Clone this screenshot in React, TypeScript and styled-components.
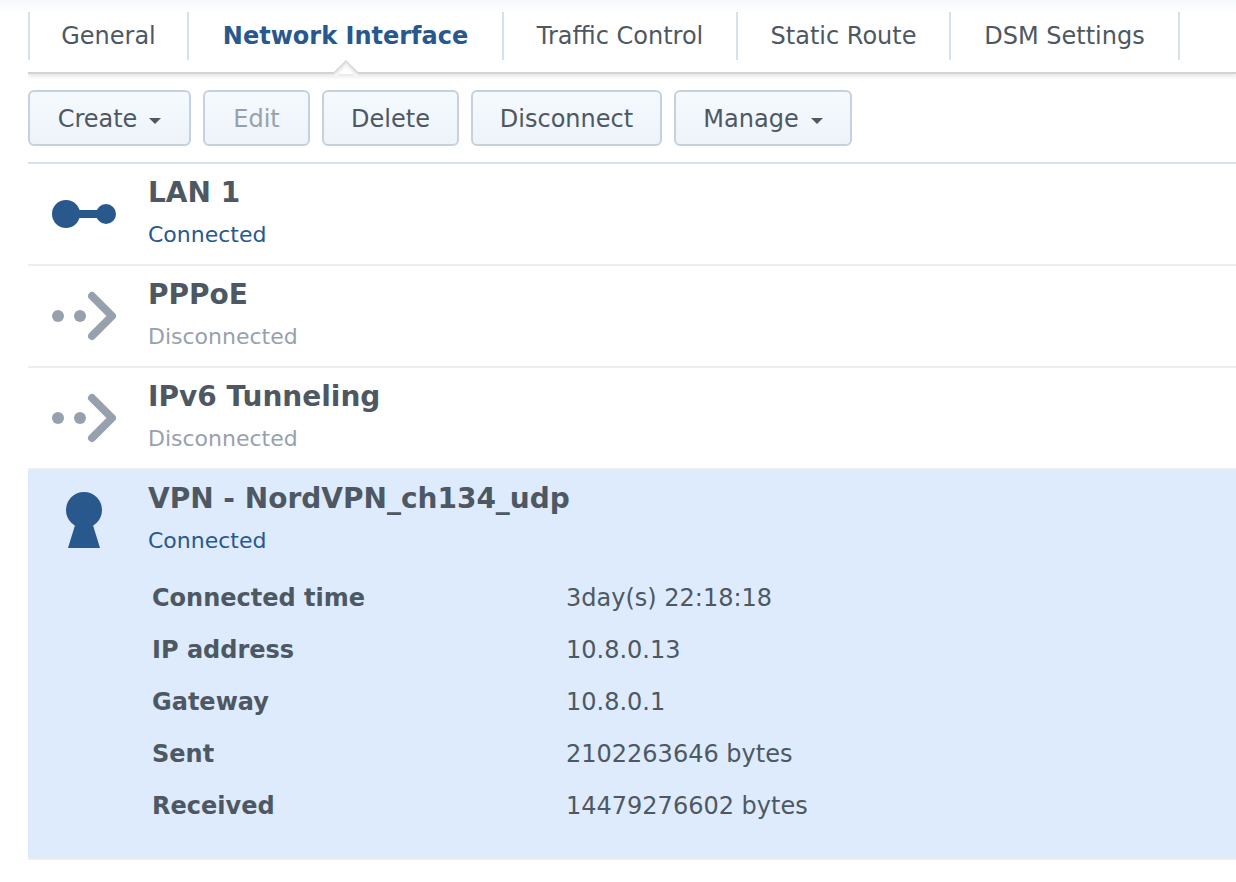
import React, { useState } from "react";
import styled, { createGlobalStyle, css } from "styled-components";

const color = {
  text: "#4d5863",
  muted: "#97a1ad",
  blue: "#29588d",
  line: "#d5e1ed",
  rowLine: "#e9eef3",
  selected: "#deebfc",
  buttonBorder: "#c6d1de",
};

const GlobalStyle = createGlobalStyle`
  *, *::before, *::after { box-sizing: border-box; }
  body {
    margin: 0;
    background: #fff;
    color: ${color.text};
    font-family: Verdana, "DejaVu Sans", sans-serif;
    font-size: 24px;
    line-height: 32px;
  }
`;

const Page = styled.div`
  padding: 12px 0 22px 28px;
  background: linear-gradient(#f5f8fc, #fff) top / 100% 12px no-repeat;
  overflow-x: hidden;
`;

const TabBar = styled.nav`
  display: flex;
  padding-bottom: 12px;
  border-bottom: 2px solid #d2d3d5;
  box-shadow: 0 2px 5px rgba(0, 0, 0, 0.12);
  clip-path: inset(0 0 -10px 0);
`;

const Tab = styled.button<{ $active: boolean; $width: number }>`
  position: relative;
  flex: none;
  width: ${(p) => p.$width}px;
  height: 48px;
  padding: 0;
  border: 0;
  border-right: 2px solid ${color.line};
  background: none;
  color: ${(p) => (p.$active ? color.blue : color.text)};
  font: inherit;
  font-weight: ${(p) => (p.$active ? 700 : 400)};
  white-space: nowrap;
  cursor: pointer;

  &:first-child {
    border-left: 2px solid ${color.line};
  }
`;

const Pointer = styled.svg`
  position: absolute;
  left: 50%;
  top: 100%;
  width: 28px;
  height: 20px;
  margin-left: -14px;
`;

const Toolbar = styled.div`
  display: flex;
  gap: 12px;
  padding: 16px 0;
  border-bottom: 2px solid ${color.line};
`;

const ToolButton = styled.button<{ $width: number }>`
  display: flex;
  flex: none;
  align-items: center;
  justify-content: center;
  gap: 12px;
  width: ${(p) => p.$width}px;
  height: 56px;
  padding: 2px 0 0;
  border: 2px solid ${color.buttonBorder};
  border-radius: 6px;
  background: linear-gradient(#f5faff, #eef3f9);
  color: ${color.text};
  font: inherit;
  cursor: pointer;

  &:disabled {
    color: ${color.muted};
    cursor: default;
  }
`;

const Caret = styled.svg`
  width: 12px;
  height: 6px;
  margin-top: 4px;
  fill: currentColor;
`;

const List = styled.ul`
  margin: 0;
  padding: 0;
  list-style: none;
`;

const Item = styled.li<{ $selected: boolean }>`
  border-bottom: 2px solid ${color.rowLine};
  ${(p) =>
    p.$selected &&
    css`
      background: ${color.selected};
    `}
`;

const Summary = styled.div`
  display: flex;
  gap: 32px;
  padding: 11px 24px 15px;
`;

const Icon = styled.svg<{ $on: boolean }>`
  flex: none;
  width: 64px;
  height: 64px;
  margin-top: 7px;
  color: ${(p) => (p.$on ? color.blue : color.muted)};
`;

const Labels = styled.div`
  display: flex;
  flex-direction: column;
  gap: 10px;
`;

const Name = styled.h2`
  margin: 0;
  font-size: 28px;
  line-height: 36px;
  font-weight: 700;
`;

const Status = styled.span<{ $on: boolean }>`
  color: ${(p) => (p.$on ? color.blue : color.muted)};
  font-size: 22px;
  line-height: 28px;
`;

const Details = styled.div`
  padding: 2px 24px 26px 124px;
`;

const DetailTable = styled.table`
  width: 100%;
  border-collapse: collapse;
  table-layout: fixed;

  th,
  td {
    height: 52px;
    padding: 0;
    text-align: left;
  }

  th {
    width: 414px;
  }
`;

type Kind = "lan" | "dial" | "vpn";

function InterfaceIcon({ kind, on }: { kind: Kind; on: boolean }) {
  return (
    <Icon $on={on} viewBox="0 0 64 64" fill="currentColor" aria-hidden="true">
      {kind === "lan" && (
        <>
          <circle cx="14" cy="32" r="14" />
          <circle cx="54" cy="32" r="10" />
          <rect x="20" y="28" width="30" height="8" />
        </>
      )}
      {kind === "dial" && (
        <>
          <circle cx="6" cy="32" r="6" />
          <circle cx="28" cy="32" r="6" />
          <path
            d="M40 12 60 32 40 52"
            fill="none"
            stroke="currentColor"
            strokeWidth="8"
            strokeLinecap="round"
            strokeLinejoin="round"
          />
        </>
      )}
      {kind === "vpn" && (
        <>
          <circle cx="32" cy="22" r="18" />
          <path d="M24 34H40L48 60H16Z" />
        </>
      )}
    </Icon>
  );
}

const tabs = [
  { label: "General", width: 161 },
  { label: "Network Interface", width: 315 },
  { label: "Traffic Control", width: 234 },
  { label: "Static Route", width: 213 },
  { label: "DSM Settings", width: 229 },
];

const actions = [
  { label: "Create", width: 163, menu: true },
  { label: "Edit", width: 107, disabled: true },
  { label: "Delete", width: 137 },
  { label: "Disconnect", width: 191 },
  { label: "Manage", width: 178, menu: true },
];

const interfaces: { name: string; kind: Kind; on: boolean; details?: [string, string][] }[] = [
  { name: "LAN 1", kind: "lan", on: true },
  { name: "PPPoE", kind: "dial", on: false },
  { name: "IPv6 Tunneling", kind: "dial", on: false },
  {
    name: "VPN - NordVPN_ch134_udp",
    kind: "vpn",
    on: true,
    details: [
      ["Connected time", "3day(s) 22:18:18"],
      ["IP address", "10.8.0.13"],
      ["Gateway", "10.8.0.1"],
      ["Sent", "2102263646 bytes"],
      ["Received", "14479276602 bytes"],
    ],
  },
];

export default function App() {
  const [active, setActive] = useState("Network Interface");

  return (
    <>
      <GlobalStyle />
      <Page>
        <TabBar>
          {tabs.map(({ label, width }) => (
            <Tab
              key={label}
              type="button"
              $width={width}
              $active={label === active}
              onClick={() => setActive(label)}
            >
              {label}
              {label === active && (
                <Pointer viewBox="0 0 28 20" aria-hidden="true">
                  <path d="M2 12 14 1 26 12V14H2Z" fill="#fff" />
                  <path d="M3 16 14 5 25 16" fill="none" stroke="#f7f7f8" strokeWidth="3" />
                  <path d="M3 14 14 3 25 14" fill="none" stroke="#ebebec" strokeWidth="2" />
                  <path d="M1 13H2L14 1 26 13H27" fill="none" stroke="#d6d7d9" strokeWidth="1.5" />
                </Pointer>
              )}
            </Tab>
          ))}
        </TabBar>
        <Toolbar>
          {actions.map((action) => (
            <ToolButton
              key={action.label}
              type="button"
              $width={action.width}
              disabled={action.disabled}
            >
              {action.label}
              {action.menu && (
                <Caret viewBox="0 0 12 6" aria-hidden="true">
                  <path d="M0 0H12L6 6Z" />
                </Caret>
              )}
            </ToolButton>
          ))}
        </Toolbar>
        <List>
          {interfaces.map((item) => (
            <Item key={item.name} $selected={!!item.details}>
              <Summary>
                <InterfaceIcon kind={item.kind} on={item.on} />
                <Labels>
                  <Name>{item.name}</Name>
                  <Status $on={item.on}>{item.on ? "Connected" : "Disconnected"}</Status>
                </Labels>
              </Summary>
              {item.details && (
                <Details>
                  <DetailTable>
                    <tbody>
                      {item.details.map(([label, value]) => (
                        <tr key={label}>
                          <th scope="row">{label}</th>
                          <td>{value}</td>
                        </tr>
                      ))}
                    </tbody>
                  </DetailTable>
                </Details>
              )}
            </Item>
          ))}
        </List>
      </Page>
    </>
  );
}
